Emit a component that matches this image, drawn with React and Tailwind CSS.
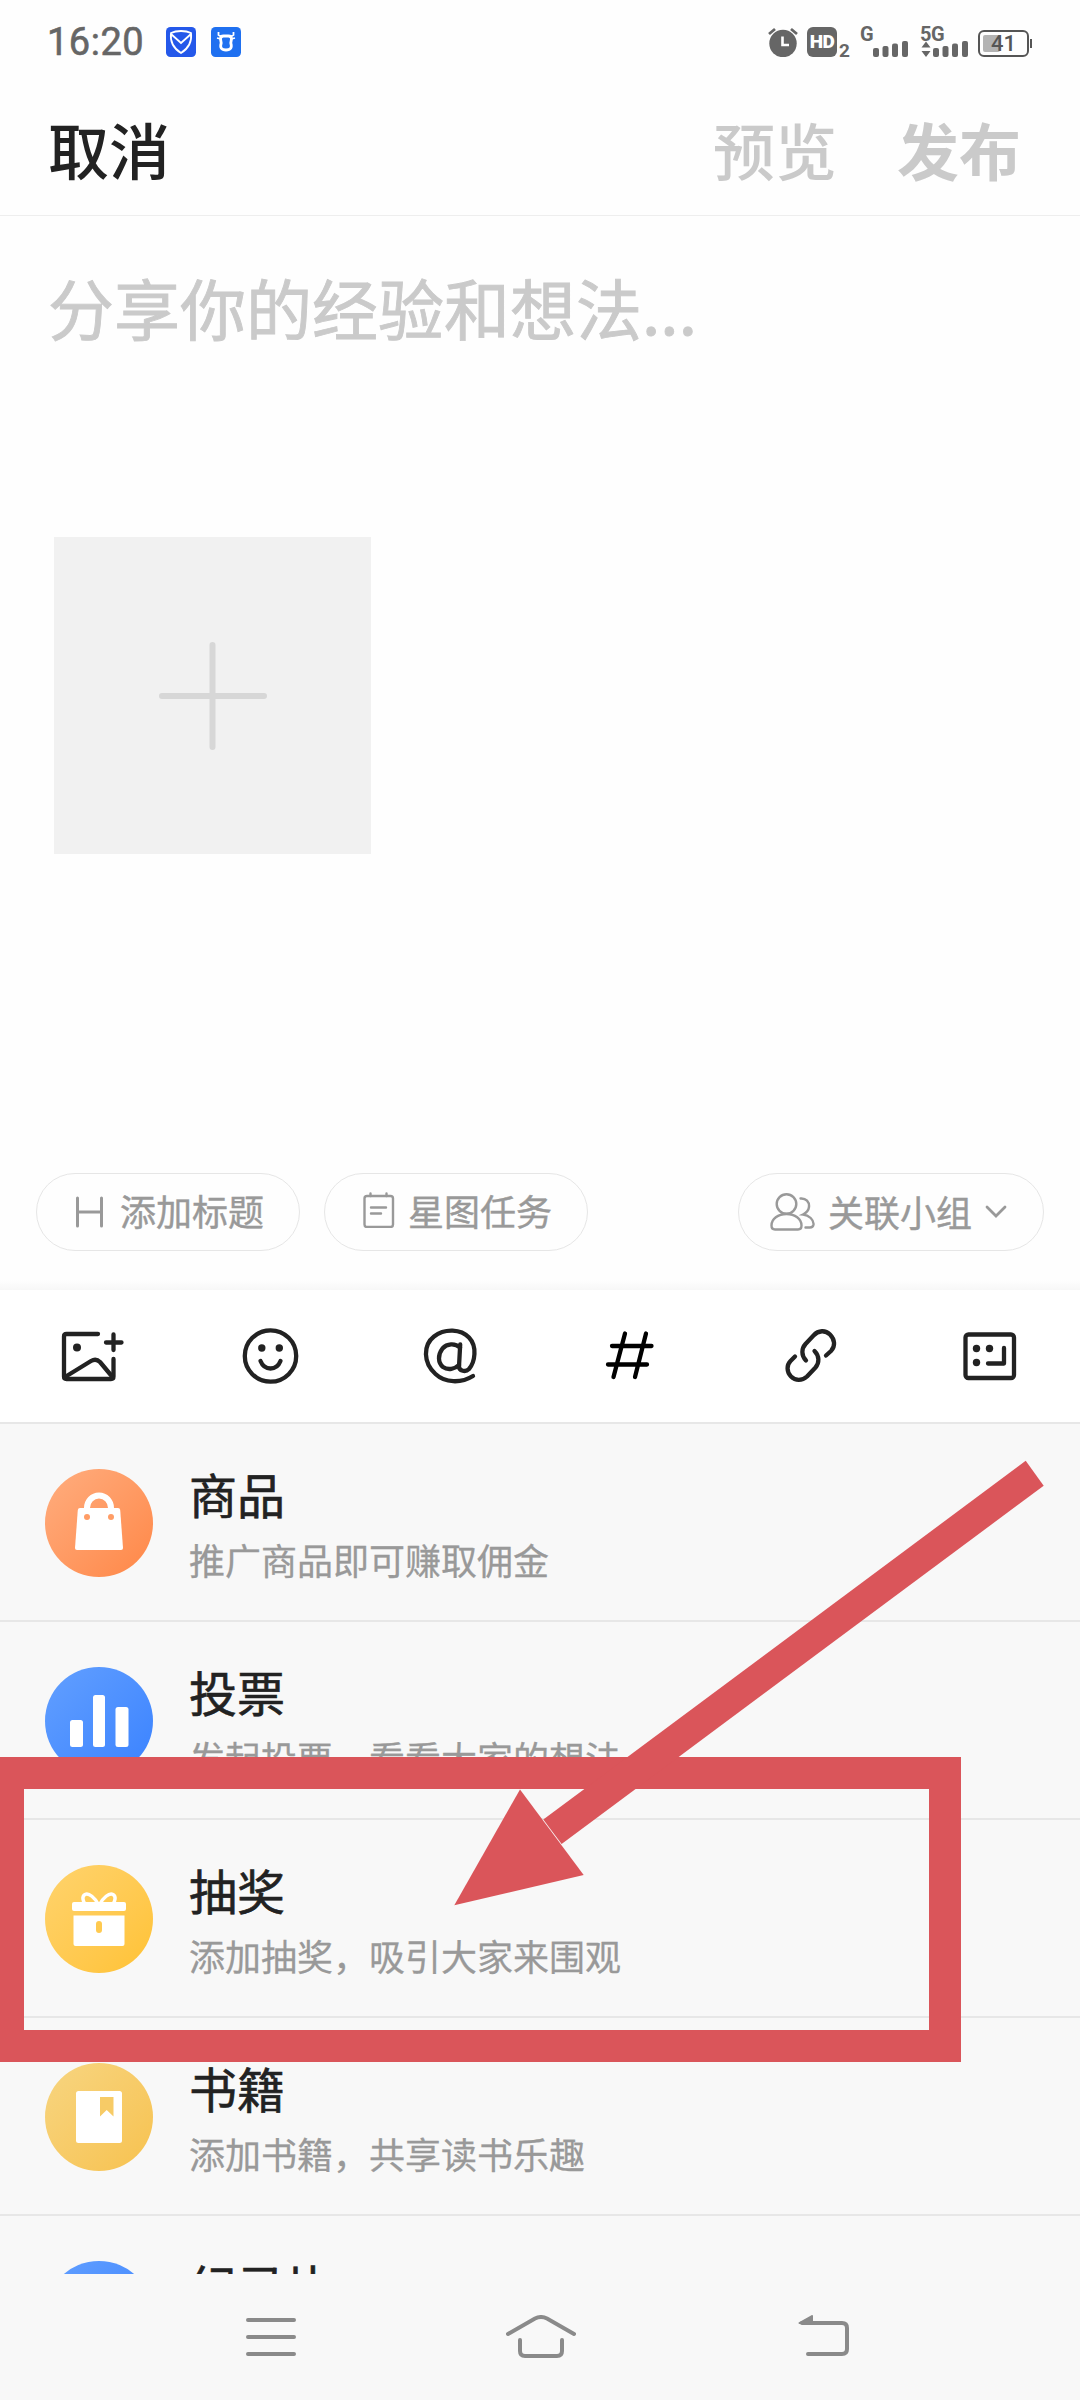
import React from "react"

const listItems = [
  {
    title: "商品",
    desc: "推广商品即可赚取佣金",
    color: "from-[#ffad7e] to-[#ff8746]",
    icon: <BagIcon />,
  },
  {
    title: "投票",
    desc: "发起投票，看看大家的想法",
    color: "from-[#629fff] to-[#3a82ff]",
    icon: <VoteIcon />,
  },
  {
    title: "抽奖",
    desc: "添加抽奖，吸引大家来围观",
    color: "from-[#ffd36c] to-[#ffc233]",
    icon: <GiftIcon />,
  },
  {
    title: "书籍",
    desc: "添加书籍，共享读书乐趣",
    color: "from-[#f7d580] to-[#f7c24e]",
    icon: <BookIcon />,
  },
  {
    title: "纪录片",
    desc: "",
    color: "from-[#629fff] to-[#3a82ff]",
    icon: null,
  },
]

// List icons, all drawn on the 108px circle
function BagIcon() {
  return (
    <svg viewBox="0 0 108 108" className="w-full h-full">
      <path d="M42 42V39a12 12.500 0 0 1 24 0V42" fill="none" stroke="#fff" strokeWidth="6" />
      <path
        d="M35 39H73Q75 39 75.200 41L78 79Q78 81 76 81H32Q30 81 30 79L32.800 41Q33 39 35 39Z"
        fill="#fff"
      />
      <circle cx="42" cy="48" r="3" fill="#ff9d66" />
      <circle cx="66" cy="48" r="3" fill="#ff9d66" />
    </svg>
  )
}

function VoteIcon() {
  return (
    <svg viewBox="0 0 108 108" className="w-full h-full" fill="#fff">
      <rect x="25" y="53" width="13" height="27" rx="2.500" />
      <rect x="48" y="28" width="12" height="52" rx="2.500" />
      <rect x="70.500" y="40" width="13" height="40" rx="2.500" />
    </svg>
  )
}

function GiftIcon() {
  return (
    <svg viewBox="0 0 108 108" className="w-full h-full" fill="#fff">
      <path
        d="M53 39C50 33 44 27.500 40 29.500C36.500 31.500 38 36 40 39M55 39C58 33 64 27.500 68 29.500C71.500 31.500 70 36 68 39"
        fill="none"
        stroke="#fff"
        strokeWidth="3.500"
      />
      <rect x="27" y="37" width="54" height="9" rx="2" />
      <path d="M28.500 50.500H79.500V79Q79.500 81 77.500 81H30.500Q28.500 81 28.500 79Z" />
      <rect x="51" y="56" width="6" height="12" rx="3" fill="#ffca50" />
    </svg>
  )
}

function BookIcon() {
  return (
    <svg viewBox="0 0 108 108" className="w-full h-full" fill="#fff">
      <rect x="31" y="28" width="46" height="52" rx="2.500" />
      <path d="M55 34H68.500V53.500L61.700 47L55 53.500Z" fill="#f7cb66" />
    </svg>
  )
}

function Signal({ label, children }) {
  return (
    <div className="relative w-[48px] h-[30px]">
      <svg width="48" height="30" viewBox="0 0 48 30" fill="#666">
        {children}
        <rect x="12" y="21" width="6" height="9" rx="2" />
        <rect x="21.500" y="19" width="6" height="11" rx="2" />
        <rect x="31" y="16.500" width="6" height="13.500" rx="2" />
        <rect x="41" y="14" width="6" height="16" rx="2" />
      </svg>
      <span className="absolute -left-[1px] -top-[5px] text-[20px] leading-[24px] font-bold tracking-[-0.5px]">
        {label}
      </span>
    </div>
  )
}

function StatusBar() {
  return (
    <div className="flex items-center h-[84px] pl-[47px] pr-[48px] text-[#666] font-[Roboto,sans-serif]">
      <span className="w-[119px] text-[38px] leading-[46px] tracking-[0.5px] [-webkit-text-stroke:0.6px]">
        16:20
      </span>
      <svg width="30" height="30" viewBox="0 0 30 30">
        <rect width="30" height="30" rx="4.500" fill="#2458ea" />
        <path
          d="M15 4C19 4 22 4.500 25 6C26 14 23 21 15 26C7 21 4 14 5 6C8 4.500 11 4 15 4ZM5 7L15 16L25 7"
          fill="none"
          stroke="#fff"
          strokeWidth="1.800"
        />
      </svg>
      <svg width="30" height="30" viewBox="0 0 30 30" className="ml-[15px]">
        <rect width="30" height="30" rx="4.500" fill="#1f70f0" />
        <path
          d="M12.500 9H17.500Q20.500 9 20.500 12L19.800 16Q22 23 15 23Q8 23 10.200 16L9.500 12Q9.500 9 12.500 9Z"
          fill="none"
          stroke="#fff"
          strokeWidth="2.800"
        />
        <path d="M7.500 5V8L11 10M22.500 5V8L19 10M6 11L10 12M24 11L20 12" fill="none" stroke="#fff" strokeWidth="1.800" />
      </svg>

      <div className="flex items-center ml-auto">
        {/* alarm */}
        <svg width="30" height="30" viewBox="0 0 30 30">
          <circle cx="15" cy="16.500" r="13.700" fill="#666" />
          <path d="M1 7L7 2M29 7L23 2" stroke="#666" strokeWidth="2.800" />
          <path d="M14.500 9.500V18H21" fill="none" stroke="#fff" strokeWidth="2.600" />
        </svg>
        <div className="relative w-[44px] h-[30px] ml-[9px]">
          <span className="flex items-center justify-center w-[30px] h-[30px] rounded-[6px] bg-[#666] text-[19px] leading-[24px] font-black tracking-[-0.5px] text-white">
            HD
          </span>
          <span className="absolute left-[32px] top-[12px] text-[19px] leading-[24px] font-bold">2</span>
        </div>
        <div className="ml-[10px]">
          <Signal label="G" />
        </div>
        <div className="ml-[12px]">
          <Signal label="5G">
            <path d="M5 14.500L9.500 20.500H0.500ZM5 30L9.500 24H0.500Z" />
          </Signal>
        </div>
        <div className="relative flex items-center w-[54px] h-[27px] ml-[9px] mt-[3px]">
          <svg width="54" height="27" viewBox="0 0 54 27">
            <rect x="1" y="1" width="49" height="25" rx="5" fill="none" stroke="#555" strokeWidth="2" />
            <rect x="5" y="5" width="17" height="17" rx="2" fill="#b3b3b3" />
            <rect x="52" y="9" width="2" height="9" fill="#555" />
          </svg>
          <span className="absolute left-[13px] top-[1px] text-[22px] leading-[26px] font-medium text-[#555]">41</span>
        </div>
      </div>
    </div>
  )
}

function Toolbar() {
  return (
    <div className="grid grid-cols-6 h-[134px] border-b-2 border-[#e7e7e7] bg-white">
      <ToolIcon>
        <path d="M38 6H6.500Q4 6 4 8.500V48.500Q4 51 6.500 51H51Q53.500 51 53.500 48.500V31" />
        <path d="M5 49L31 33Q36 30 40 34L52.500 49" />
        <path d="M53.500 6.500V22M46 14.500H61.500" />
        <circle cx="17" cy="19.500" r="4" fill="#222" stroke="none" />
      </ToolIcon>
      <ToolIcon>
        <circle cx="30.500" cy="28" r="25.700" />
        <path d="M20.500 33Q23.500 40.500 30.500 40.500Q37.500 40.500 40.500 33" />
        <circle cx="21.800" cy="20" r="3.700" fill="#222" stroke="none" />
        <circle cx="39.300" cy="20" r="3.700" fill="#222" stroke="none" />
      </ToolIcon>
      <ToolIcon>
        <path d="M53 48C41 55.500 25 55 15.500 46C3 35 3 17 14 8.500C25 0 41 1 49 9.500C57.500 18.500 55 34 49 41C45.500 44.500 39 43 39 38.500L40.200 16.500" />
        <path d="M40 19.500C35 15 27 15.500 22.500 20.500C17.500 27 18 35 23 39C28 42.500 35 41 39 37" />
      </ToolIcon>
      <ToolIcon stroke="#000">
        <path d="M25 5.500L13.500 49M46 5.500L35 49M12 18H51.500M8 36.500H47" />
      </ToolIcon>
      <ToolIcon>
        <path d="M26 32.500C21 27 21.500 20.500 25.500 16L33.500 7.500C38.500 2 45.500 2 50 6.500C55 11.500 55.500 18.500 51 23L46 27.500" />
        <path d="M34.500 23C39.500 28 39.500 35 35.500 39.500L27 48.500C22 53 15.500 53 11 48.500C6.500 44 6.500 37 10.500 33L15 28.500" />
      </ToolIcon>
      <ToolIcon>
        <rect x="5.500" y="6.500" width="48.500" height="43.500" rx="3" />
        <path d="M44 20V35.500H28" />
        <circle cx="16.500" cy="20.500" r="3.700" fill="#222" stroke="none" />
        <circle cx="29.500" cy="20.500" r="3.700" fill="#222" stroke="none" />
        <circle cx="16.500" cy="34.500" r="3.700" fill="#222" stroke="none" />
      </ToolIcon>
    </div>
  )
}

function ToolIcon({ children, stroke = "#222" }) {
  return (
    <button className="flex items-center justify-center">
      <svg
        width="60"
        height="56"
        viewBox="0 0 60 56"
        fill="none"
        stroke={stroke}
        strokeWidth="4.300"
        strokeLinecap="round"
        strokeLinejoin="round"
        className="overflow-visible"
      >
        {children}
      </svg>
    </button>
  )
}

function NavBar() {
  return (
    <div className="flex items-start h-[126px] pl-[246px] pt-[41px] bg-[#f8f8f8]">
      <svg width="50" height="44" viewBox="0 0 50 44" stroke="#8a8a8a" strokeWidth="4" strokeLinecap="round">
        <path d="M2 5H48M2 22H48M2 39H48" />
      </svg>
      <svg
        width="70"
        height="44"
        viewBox="0 0 70 44"
        fill="none"
        stroke="#8a8a8a"
        strokeWidth="4"
        strokeLinecap="round"
        className="ml-[210px]"
      >
        <path d="M2 19L29 3.500Q35 0.500 41 3.500L68 19" />
        <path d="M14 25V36Q14 41 19 41H51Q56 41 56 36V25" />
      </svg>
      <svg
        width="52"
        height="44"
        viewBox="0 0 52 44"
        fill="none"
        stroke="#8a8a8a"
        strokeWidth="4"
        strokeLinecap="round"
        className="ml-[222px]"
      >
        <path d="M4 8H44Q49 8 49 13V34Q49 39 44 39H10" />
        <path d="M1.500 8L14 1V8Z" fill="#8a8a8a" strokeWidth="2" strokeLinejoin="round" />
      </svg>
    </div>
  )
}

export default function App() {
  return (
    <div className="relative flex flex-col w-[1080px] h-[2400px] overflow-hidden bg-[#fefefe] font-['Noto_Sans_CJK_SC',sans-serif] text-[#222]">
      <StatusBar />

      <div className="flex items-center h-[132px] pl-[48px] pr-[59px] pb-[1px] border-b border-[#eee] text-[61px] leading-[88px]">
        <button className="font-medium">取消</button>
        <button className="ml-auto font-medium text-[62px] text-[#cacaca]">预览</button>
        <button className="ml-[60px] font-bold text-[62px] text-[#cacaca]">发布</button>
      </div>

      {/* Editor */}
      <div className="flex flex-col h-[1074px] px-[48px] pt-[52px]">
        <p className="h-[269px] text-[66px] leading-[76px] [-webkit-text-stroke:0.9px] text-[#cacaca]">
          分享你的经验和想法...
        </p>
        <button className="flex items-center justify-center w-[317px] h-[317px] ml-[6px] bg-[#f1f1f1]">
          <svg width="108" height="108" viewBox="0 0 108 108" stroke="#d7d7d7" strokeWidth="6" strokeLinecap="round">
            <path d="M53.500 3V105M3 54H105" />
          </svg>
        </button>
        <div className="flex mt-[319px] -ml-[12px] -mr-[12px] text-[36px] leading-[52px] [-webkit-text-stroke:0.4px] text-[#999]">
          <button className="flex items-center w-[264px] h-[78px] pl-[38px] border border-[#e6e6e6] rounded-full">
            <svg width="30" height="34" viewBox="0 0 30 34" fill="none" stroke="#999" strokeWidth="3" strokeLinecap="round">
              <path d="M2.500 3V31M26.500 3V31M2.500 17H26.500" />
            </svg>
            <span className="ml-[15px] pb-[4px]">添加标题</span>
          </button>
          <button className="flex items-center w-[264px] h-[78px] ml-[24px] pl-[38px] border border-[#e6e6e6] rounded-full">
            <svg
              width="32"
              height="36"
              viewBox="0 0 32 36"
              fill="none"
              stroke="#999"
              strokeWidth="2.400"
              strokeLinecap="round"
              className="-mt-[4px]"
            >
              <rect x="1.500" y="4" width="28.500" height="31" rx="2.500" />
              <path d="M7.500 1.500V4M23.500 1.500V4M8 15.500H23M8 21.500H18" />
            </svg>
            <span className="ml-[13px] pb-[4px]">星图任务</span>
          </button>
          <button className="flex items-center w-[306px] h-[78px] ml-auto pl-[31px] border border-[#e6e6e6] rounded-full">
            <svg
              width="45"
              height="38"
              viewBox="0 0 45 38"
              fill="none"
              stroke="#999"
              strokeWidth="2.400"
              strokeLinecap="round"
            >
              <circle cx="16.500" cy="11" r="9.800" />
              <path d="M16.500 21C25 21 31.500 26 31.500 32.500Q31.500 36.500 28 36.500H5Q1.500 36.500 1.500 32.500C1.500 26 8 21 16.500 21Z" />
              <path d="M30.500 5.500C36 5 39.500 9 39 14C38.500 18 36 20 33 21.500C39 22 44 27 43.500 31.500Q43 34.500 40 34.500H35.500" />
            </svg>
            <span className="ml-[13px] pb-[2px]">关联小组</span>
            <svg
              width="22"
              height="14"
              viewBox="0 0 22 14"
              fill="none"
              stroke="#999"
              strokeWidth="2.800"
              strokeLinecap="round"
              className="ml-[13px]"
            >
              <path d="M2 2L11 11L20 2" />
            </svg>
          </button>
        </div>
        <div className="h-[10px] mt-auto -mx-[48px] shrink-0 bg-linear-to-b from-[#fefefe] to-[#f7f7f7]" />
      </div>

      <Toolbar />

      <div className="h-[850px] overflow-hidden bg-[#f8f8f8]">
        {listItems.map((item) => (
          <div key={item.title} className="flex h-[198px] pl-[45px] pt-[45px] border-b-2 border-[#e7e7e7]">
            <div className={`w-[108px] h-[108px] rounded-full overflow-hidden bg-linear-to-br ${item.color}`}>
              {item.icon}
            </div>
            <div className="-mt-[2px] ml-[36px]">
              <h2 className="text-[48px] leading-[52px] [-webkit-text-stroke:0.6px]">{item.title}</h2>
              <p className="mt-[20px] text-[36px] leading-[40px] [-webkit-text-stroke:0.3px] text-[#999]">
                {item.desc}
              </p>
            </div>
          </div>
        ))}
      </div>

      <NavBar />

      {/* Red highlight and arrow over the list */}
      <div className="absolute -left-[8px] top-[1756.500px] w-[969px] h-[305.500px] border-[32px] border-[#da555a]" />
      <svg
        width="1080"
        height="2400"
        viewBox="0 0 1080 2400"
        fill="#da555a"
        className="absolute left-0 top-0 pointer-events-none"
      >
        <path d="M1025.700 1460.800L1043.700 1485.700L561.600 1844L543.300 1819.600Z" />
        <path d="M520 1789.400L583.700 1875.100L454.300 1905.300Z" />
      </svg>
    </div>
  )
}
